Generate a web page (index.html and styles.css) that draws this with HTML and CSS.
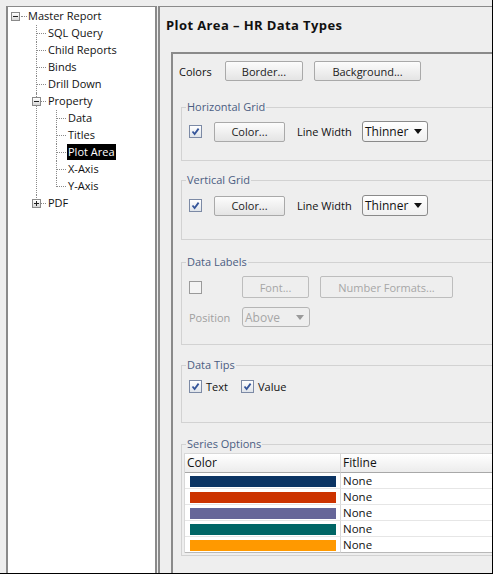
FILE: index.html
```html
<!DOCTYPE html>
<html lang="en">
<head>
    <meta charset="UTF-8">
    <title>Plot Area - HR Data Types</title>
    <link rel="stylesheet" href="styles.css">
</head>
<body>
<div class="frame">

    <!-- report tree -->
    <div class="tree">
        <div class="root"><span class="toggle minus"></span><span class="label">Master Report</span></div>
        <ul class="branch">
            <li><span class="label">SQL Query</span></li>
            <li><span class="label">Child Reports</span></li>
            <li><span class="label">Binds</span></li>
            <li><span class="label">Drill Down</span></li>
            <li><span class="toggle minus"></span><span class="label">Property</span>
                <ul class="branch">
                    <li><span class="label">Data</span></li>
                    <li><span class="label">Titles</span></li>
                    <li><span class="label selected">Plot Area</span></li>
                    <li><span class="label">X-Axis</span></li>
                    <li><span class="label">Y-Axis</span></li>
                </ul>
            </li>
            <li><span class="toggle plus"></span><span class="label">PDF</span></li>
        </ul>
    </div>

    <!-- property page -->
    <div class="main">
        <h2 class="title">Plot Area – HR Data Types</h2>

        <div class="inner">
            <div class="row colors-row">
                <span class="text colors-label">Colors</span>
                <button class="btn btn-border">Border...</button>
                <button class="btn btn-background">Background...</button>
            </div>

            <fieldset class="group grid-h">
                <legend>Horizontal Grid</legend>
                <div class="row">
                    <span class="check checked"><svg width="11" height="11" viewBox="0 0 11 11"><path d="M2.5 5.5 L4.6 8 L8.6 2.6" fill="none" stroke="#34559a" stroke-width="1.8"/></svg></span>
                    <button class="btn btn-color">Color...</button>
                    <span class="text lw">Line Width</span>
                    <span class="combo">Thinner<i class="arrow"></i></span>
                </div>
            </fieldset>

            <fieldset class="group grid-v">
                <legend>Vertical Grid</legend>
                <div class="row">
                    <span class="check checked"><svg width="11" height="11" viewBox="0 0 11 11"><path d="M2.5 5.5 L4.6 8 L8.6 2.6" fill="none" stroke="#34559a" stroke-width="1.8"/></svg></span>
                    <button class="btn btn-color">Color...</button>
                    <span class="text lw">Line Width</span>
                    <span class="combo">Thinner<i class="arrow"></i></span>
                </div>
            </fieldset>

            <fieldset class="group labels">
                <legend>Data Labels</legend>
                <div class="row row-tall">
                    <span class="check off"></span>
                    <button class="btn disabled btn-font">Font...</button>
                    <button class="btn disabled btn-number">Number Formats...</button>
                </div>
                <div class="row row-pos">
                    <span class="text disabled-text pos-label">Position</span>
                    <span class="combo disabled combo-above">Above<i class="arrow"></i></span>
                </div>
            </fieldset>

            <fieldset class="group tips">
                <legend>Data Tips</legend>
                <div class="row row-tips">
                    <span class="check checked"><svg width="11" height="11" viewBox="0 0 11 11"><path d="M2.5 5.5 L4.6 8 L8.6 2.6" fill="none" stroke="#34559a" stroke-width="1.8"/></svg></span>
                    <span class="text tip-text">Text</span>
                    <span class="check checked"><svg width="11" height="11" viewBox="0 0 11 11"><path d="M2.5 5.5 L4.6 8 L8.6 2.6" fill="none" stroke="#34559a" stroke-width="1.8"/></svg></span>
                    <span class="text tip-value">Value</span>
                </div>
            </fieldset>

            <fieldset class="group series">
                <legend>Series Options</legend>
                <div class="series-table">
                    <div class="cell head col-color">Color</div>
                    <div class="cell head">Fitline</div>

                    <div class="cell col-color"><span class="swatch" style="background:#0b3463"></span></div>
                    <div class="cell">None</div>
                    <div class="cell col-color"><span class="swatch" style="background:#cc3300"></span></div>
                    <div class="cell">None</div>
                    <div class="cell col-color"><span class="swatch" style="background:#666699"></span></div>
                    <div class="cell">None</div>
                    <div class="cell col-color"><span class="swatch" style="background:#006666"></span></div>
                    <div class="cell">None</div>
                    <div class="cell col-color last"><span class="swatch" style="background:#ff9900"></span></div>
                    <div class="cell last">None</div>
                </div>
            </fieldset>
        </div>
    </div>
</div>
</body>
</html>
```

FILE: styles.css
```css
/* Global */
body {
    margin: 0;
    background: #eeeeee;
    font-family: 'Open Sans', 'DejaVu Sans', sans-serif;
    font-size: 11px;
    color: #111;
}

.frame {
    width: 493px;
    height: 574px;
    box-sizing: border-box;
    padding: 6px 0 0 6px;
    border-right: 1px solid #000;
    border-bottom: 1px solid #000;
    display: flex;
    overflow: hidden;
}

/* Tree */
.tree {
    width: 151px;
    flex: none;
    box-sizing: border-box;
    background: #fff;
    border: 2px solid #8a8a8a;
    border-top-width: 1px;
    border-bottom: none;
    padding-top: 1px;
}

.root {
    position: relative;
    height: 17px;
    line-height: 17px;
    padding-left: 20px;
}

.root::before {
    content: "";
    position: absolute;
    left: 13px;
    top: 8px;
    width: 6px;
    border-top: 1px dotted #8a8a8a;
}

.root .toggle {
    left: 3px;
    top: 4px;
}

.branch {
    list-style: none;
    margin: 0 0 0 28px;
    padding: 0;
}

.branch .branch {
    margin-left: 8px;
}

.branch li {
    position: relative;
    padding-left: 12px;
    line-height: 17px;
}

.branch li::before {
    content: "";
    position: absolute;
    left: 0;
    top: 8px;
    width: 10px;
    border-top: 1px dotted #8a8a8a;
}

.branch li::after {
    content: "";
    position: absolute;
    left: 0;
    top: 0;
    bottom: 0;
    border-left: 1px dotted #8a8a8a;
}

.branch li:last-child::after {
    bottom: auto;
    height: 9px;
}

.toggle {
    position: absolute;
    left: -4px;
    top: 4px;
    width: 7px;
    height: 7px;
    border: 1px solid #8a8a8a;
    background: linear-gradient(#ffffff, #d8d8d8);
    z-index: 2;
}

.toggle::before {
    content: "";
    position: absolute;
    left: 1px;
    top: 3px;
    width: 5px;
    height: 1px;
    background: #222;
}

.toggle.plus::after {
    content: "";
    position: absolute;
    left: 3px;
    top: 1px;
    width: 1px;
    height: 5px;
    background: #222;
}

.label {
    display: inline-block;
    height: 16px;
    line-height: 16px;
    padding: 0 1px;
    margin-left: -1px;
    vertical-align: top;
}

.label.selected {
    background: #000;
    color: #fff;
}

/* Main panel */
.main {
    flex: 1;
    min-width: 0;
    margin-left: 1px;
    border-left: 2px solid #8a8a8a;
    border-top: 1px solid #8a8a8a;
    overflow: hidden;
}

.title {
    margin: 0;
    height: 18px;
    padding: 9px 0 0 6px;
    font-size: 13px;
    font-weight: 700;
    line-height: 18px;
    letter-spacing: 0.4px;
    color: #111;
}

.inner {
    width: 400px;
    margin: 18px 0 0 11px;
    border-left: 2px solid #8a8a8a;
    border-top: 2px solid #8a8a8a;
    padding: 7px 0 0 6px;
    height: 600px;
}

.row {
    display: flex;
    align-items: center;
    height: 21px;
}

.colors-row {
    height: 20px;
}

.colors-label {
    width: 46px;
}

/* Buttons */
.btn {
    box-sizing: border-box;
    height: 20px;
    padding: 0;
    font-family: inherit;
    font-size: 11px;
    color: #222;
    border: 1px solid #a9a9a9;
    border-radius: 2px;
    background: linear-gradient(#fcfcfc, #e4e4e4);
}

.btn-border { width: 78px; margin-right: 11px; }
.btn-background { width: 107px; }
.btn-color { width: 71px; margin-right: 12px; }

.btn.disabled {
    height: 22px;
    color: #a6a6a6;
    border-color: #bdbdbd;
    background: #eeeeee;
}

.btn-font { width: 67px; margin-right: 11px; }
.btn-number { width: 133px; }

/* Checkboxes */
.check {
    box-sizing: border-box;
    width: 13px;
    height: 13px;
    flex: none;
    border: 1px solid #7c8aa5;
    background: linear-gradient(#ffffff, #dfe4ea);
    display: flex;
    align-items: center;
    justify-content: center;
    margin-right: 12px;
}

.check.off {
    border-color: #9a9a9a;
    background: #f4f4f4;
    margin-right: 40px;
}

/* Combo boxes */
.combo {
    position: relative;
    box-sizing: border-box;
    width: 66px;
    height: 21px;
    padding-left: 2px;
    font-size: 12px;
    line-height: 19px;
    border: 1px solid #8a8a8a;
    border-radius: 3px;
    background: linear-gradient(#ffffff, #f0f0f0);
    margin-left: 10px;
}

.arrow {
    position: absolute;
    right: 5px;
    top: 7px;
    width: 0;
    height: 0;
    border-left: 4px solid transparent;
    border-right: 4px solid transparent;
    border-top: 5px solid #111;
}

.combo.disabled {
    width: 68px;
    height: 20px;
    margin-left: 0;
    color: #a6a6a6;
    border-color: #b5b5b5;
    background: #eeeeee;
}

.combo.disabled .arrow {
    border-top-color: #9a9a9a;
}

.text.lw {
    width: 55px;
}

.disabled-text {
    color: #a0a0a0;
}

.pos-label {
    width: 53px;
}

/* Group boxes */
.group {
    width: 330px;
    margin: 0 0 0 2px;
    border: 1px solid #d2d2d2;
    padding: 7px 0 18px 7px;
    min-width: 0;
}

.group legend {
    padding: 0 1px;
    margin-left: -3px;
    line-height: 14px;
    color: #4b5d82;
}

.grid-h { margin-top: 19px; }
.grid-v { margin-top: 12px; padding-top: 8px; padding-bottom: 23px; }
.labels { margin-top: 15px; padding-bottom: 17px; }
.row-tall { height: 22px; }
.row-pos { height: 20px; margin-top: 9px; }
.tips { margin-top: 13px; padding-top: 7px; padding-bottom: 28px; }

.row-tips { height: 15px; }
.row-tips .check { margin-right: 4px; }
.tip-text { width: 35px; }

/* Series table */
.series {
    margin-top: 14px;
    padding: 2px 0 2px 2px;
}

.series legend {
    margin-left: 2px;
}

.series-table {
    display: grid;
    grid-template-columns: 156px 1fr;
    background: #fff;
    border-top: 1px solid #d8d8d8;
    border-left: 1px solid #d8d8d8;
}

.cell {
    height: 15px;
    line-height: 15px;
    font-size: 11.5px;
    padding-left: 2px;
    border-bottom: 1px solid #e6e6e6;
}

.cell.head {
    height: 18px;
    line-height: 18px;
    font-size: 12px;
    background: linear-gradient(#ffffff, #ececec);
    border-bottom: 1px solid #a8a8a8;
}

.cell.col-color {
    border-right: 1px solid #d8d8d8;
}

.cell.last {
    border-bottom-color: #b8b8b8;
}

.swatch {
    display: block;
    width: 146px;
    height: 11px;
    margin: 3px 0 0 3px;
}
```
